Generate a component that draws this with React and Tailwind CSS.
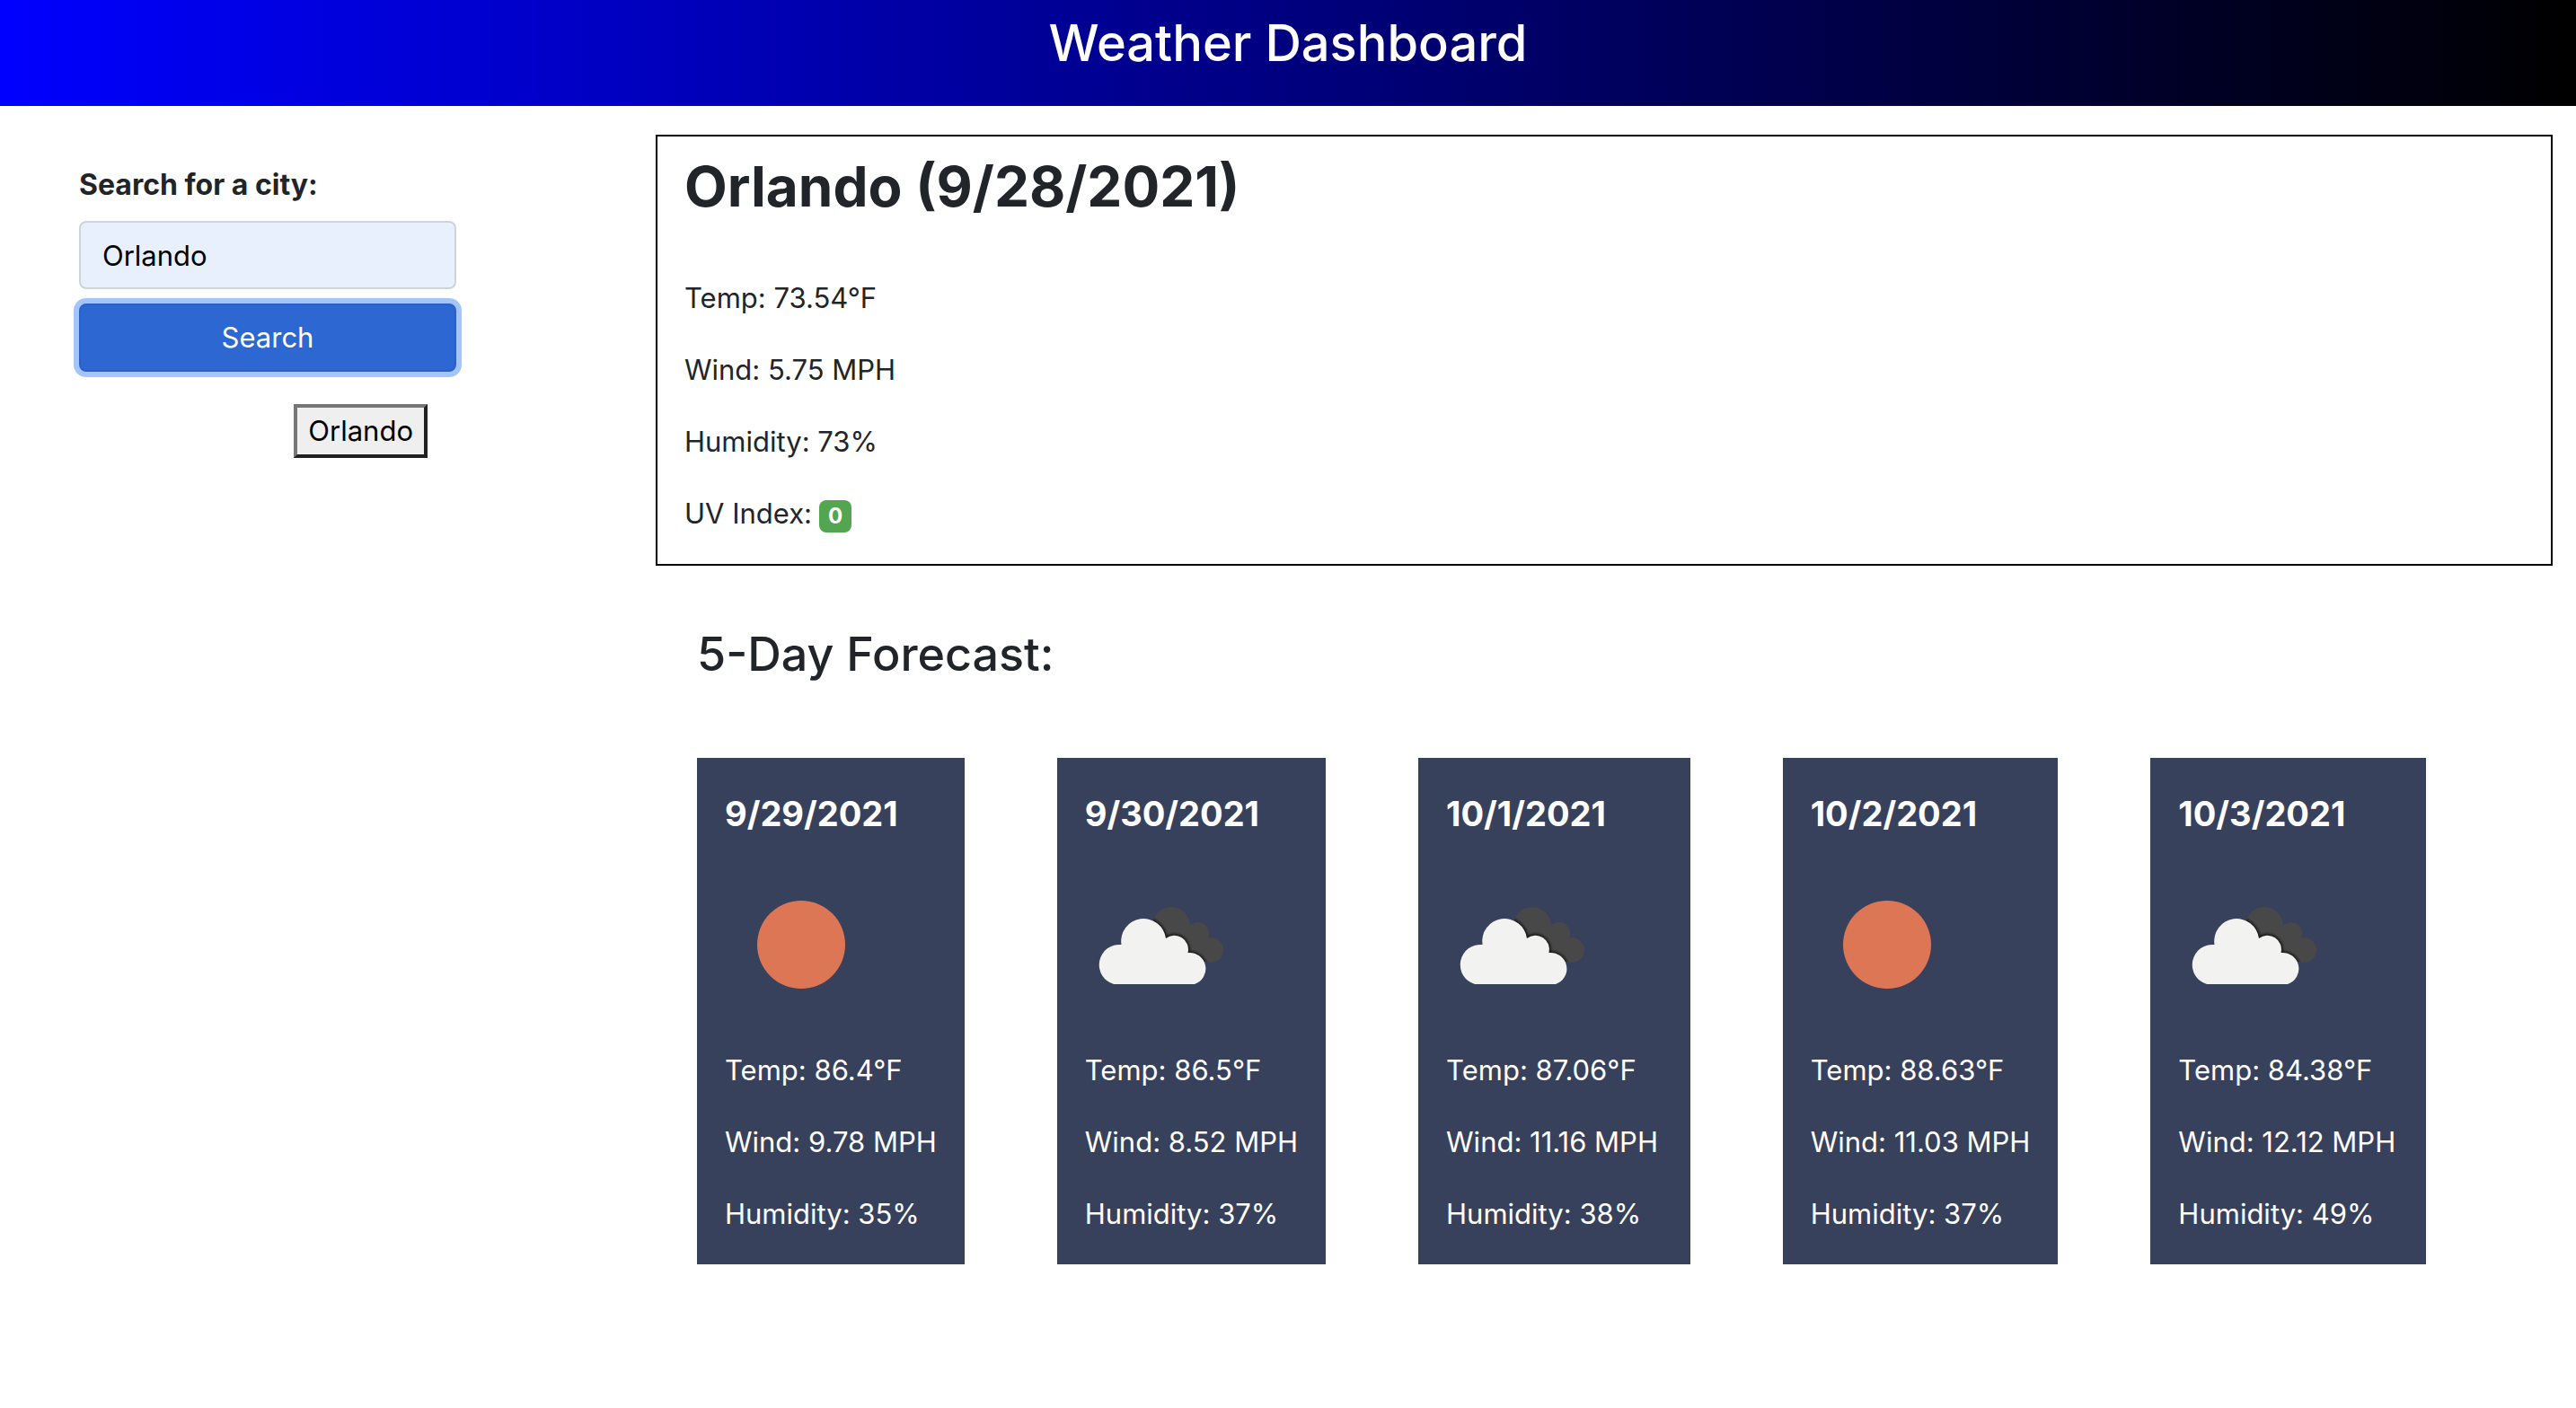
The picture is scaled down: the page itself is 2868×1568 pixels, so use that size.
import React, { useState } from "react";

const current = {
  city: "Orlando",
  date: "9/28/2021",
  temp: "73.54",
  wind: "5.75",
  humidity: "73",
  uv: "0",
};

const forecast = [
  { date: "9/29/2021", icon: "sun", temp: "86.4", wind: "9.78", humidity: "35" },
  { date: "9/30/2021", icon: "clouds", temp: "86.5", wind: "8.52", humidity: "37" },
  { date: "10/1/2021", icon: "clouds", temp: "87.06", wind: "11.16", humidity: "38" },
  { date: "10/2/2021", icon: "sun", temp: "88.63", wind: "11.03", humidity: "37" },
  { date: "10/3/2021", icon: "clouds", temp: "84.38", wind: "12.12", humidity: "49" },
];

const FRONT_CLOUD =
  "M32 128A22.500 22.500 0 0 1 40.500 84A25 25 0 1 1 90 77A15.500 15.500 0 0 1 114.500 93A18 18 0 0 1 122 128Z";

function SunIcon() {
  return (
    <svg viewBox="0 0 168 168" className="block size-42" role="img" aria-label="Clear sky">
      <circle cx="85" cy="84" r="49" fill="#dc7655" />
    </svg>
  );
}

function CloudsIcon() {
  return (
    <svg viewBox="0 0 168 168" className="block size-42" role="img" aria-label="Broken clouds">
      <defs>
        <clipPath id="back-cloud">
          <circle cx="96" cy="63" r="21" />
          <circle cx="126" cy="71" r="12" />
          <circle cx="140" cy="90" r="14" />
          <path d="M96 60L126 66L140 90L136 103L96 100Z" />
        </clipPath>
        <filter id="soft" x="-10%" y="-10%" width="120%" height="120%">
          <feGaussianBlur stdDeviation="1" />
        </filter>
      </defs>
      <g fill="#484848">
        <circle cx="96" cy="63" r="21" />
        <circle cx="126" cy="71" r="12" />
        <circle cx="140" cy="90" r="14" />
        <path d="M96 60L126 66L140 90L136 103L96 100Z" />
      </g>
      <g clipPath="url(#back-cloud)">
        <path d={FRONT_CLOUD} fill="none" stroke="#1c1c1c" strokeWidth="4" filter="url(#soft)" />
      </g>
      <path d={FRONT_CLOUD} fill="#f2f2f0" />
    </svg>
  );
}

function ForecastCard({ day }) {
  return (
    <article className="bg-[#38415c] px-[31px] pt-8 whitespace-nowrap text-white">
      <h3 className="mb-8 text-[38px] leading-[60px] font-bold">{day.date}</h3>
      <div className="mb-8">{day.icon === "sun" ? <SunIcon /> : <CloudsIcon />}</div>
      <p className="mb-8">Temp: {day.temp}°F</p>
      <p className="mb-8">Wind: {day.wind} MPH</p>
      <p className="mb-8">Humidity: {day.humidity}%</p>
    </article>
  );
}

export default function App() {
  const [city, setCity] = useState("Orlando");
  return (
    <div className="min-h-screen bg-white font-['Inter',sans-serif] text-[31px] leading-12 text-[#212529]">
      <header className="bg-linear-[to_right,#0000ff,#000000] pt-3 pb-[34px] text-center text-white">
        <h1 className="text-[56px] leading-[72px] font-medium">Weather Dashboard</h1>
      </header>
      <div className="flex pt-8">
        <aside className="w-1/4 shrink-0 pt-8 pr-[209px] pl-[88px]">
          <form onSubmit={(e) => e.preventDefault()}>
            <label htmlFor="city" className="mb-4 block text-[32px] leading-12 font-bold">
              Search for a city:
            </label>
            <input
              id="city"
              type="text"
              value={city}
              onChange={(e) => setCity(e.target.value)}
              className="mb-4 block h-19 w-full rounded-lg border-2 border-[#ced4da] bg-[#e8f0fe] px-6 text-black outline-none"
            />
            <button
              type="submit"
              className="block h-19 w-full rounded-lg border-2 border-[#2a60c8] bg-[#2d67d2] text-white ring-6 ring-[#a4c5fb]"
            >
              Search
            </button>
          </form>
          <div className="flex justify-end pt-9 pr-8">
            <button
              type="button"
              className="h-15 border-4 border-t-[#767676] border-r-[#212121] border-b-[#212121] border-l-[#767676] bg-[#efefef] px-3 leading-[52px] text-black"
            >
              Orlando
            </button>
          </div>
        </aside>
        <main className="min-w-0 flex-1 pr-[26px] pl-[13px]">
          <section className="border-2 border-black px-[30px] pt-4">
            <h2 className="mb-15 text-[62px] leading-20 font-bold">
              {current.city} ({current.date})
            </h2>
            <p className="mb-8">Temp: {current.temp}°F</p>
            <p className="mb-8">Wind: {current.wind} MPH</p>
            <p className="mb-8">Humidity: {current.humidity}%</p>
            <p className="mb-8 flex items-center gap-2">
              UV Index:
              <span className="mt-1.5 rounded-lg bg-[#54a551] px-2.5 text-2xl leading-9 font-bold text-white">
                {current.uv}
              </span>
            </p>
          </section>
          <section className="pt-16 pr-[141px] pl-[46px]">
            <h2 className="mb-20 text-[52px] leading-[70px] font-medium">5-Day Forecast:</h2>
            <div className="grid grid-cols-[296fr_298fr_304fr_308fr_308fr] gap-[103px]">
              {forecast.map((day) => (
                <ForecastCard key={day.date} day={day} />
              ))}
            </div>
          </section>
        </main>
      </div>
    </div>
  );
}
